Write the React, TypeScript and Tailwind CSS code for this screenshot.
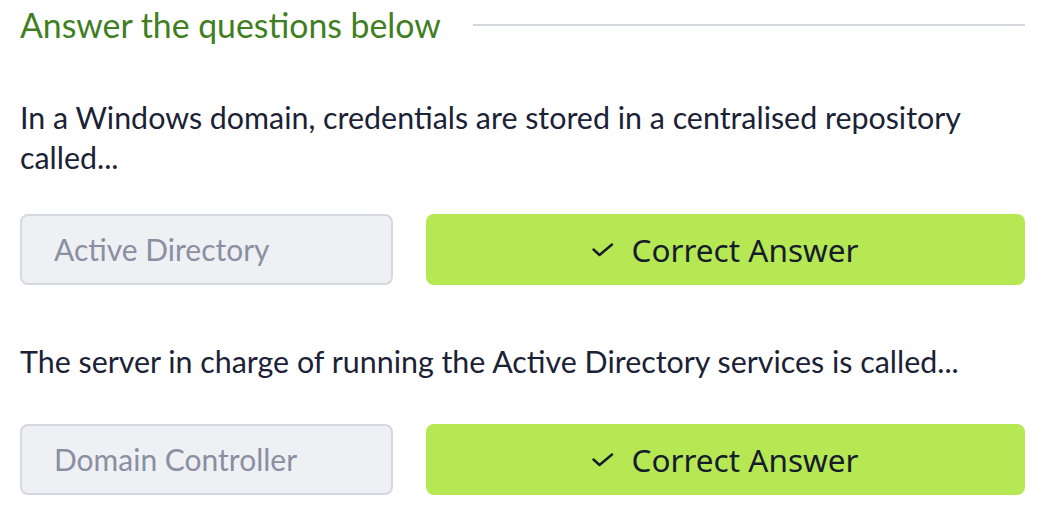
import React from "react";

function Check() {
  return (
    <svg width="22" height="14" viewBox="0 0 22 14" fill="none" className="shrink-0">
      <path d="M1.5 6.5 L7.5 12 L20 1.5" stroke="#161c2c" strokeWidth="2.4" strokeLinecap="round" strokeLinejoin="round" />
    </svg>
  );
}

function Question({ text, answer, gapClass }: { text: string; answer: string; gapClass: string }) {
  return (
    <div className="flex flex-col">
      <p className="text-[30.4px] leading-[40px] text-[#1b2235]" style={{ fontFamily: "Lato, sans-serif" }}>
        {text}
      </p>
      <div className={`${gapClass} flex gap-[33px]`}>
        <div className="flex h-[71px] w-[373px] items-center rounded-[8px] border-2 border-[#d5d8de] bg-[#eef0f4] pl-[32px] text-[30px] text-[#8a8fa1]" style={{ fontFamily: "Lato, sans-serif" }}>
          {answer}
        </div>
        <div className="flex h-[71px] flex-1 items-center justify-center gap-[17px] rounded-[8px] bg-[#b5e853] text-[31.5px] text-[#161c2c]" style={{ fontFamily: "'Noto Sans', sans-serif" }}>
          <Check />
          <span>Correct Answer</span>
        </div>
      </div>
    </div>
  );
}

export default function App() {
  return (
    <div className="w-[1060px] bg-white pl-[20px] pr-[35px] pt-[2px]">
      <div className="flex items-center">
        <h2 className="text-[33.8px] leading-[46px] text-[#3f7f22]" style={{ fontFamily: "Lato, sans-serif" }}>
          Answer the questions below
        </h2>
        <div className="ml-[32px] h-[2px] flex-1 bg-[#d3d7dc]" />
      </div>
      <div className="mt-[49px] flex flex-col gap-[56px]">
        <Question
          text="In a Windows domain, credentials are stored in a centralised repository called..."
          answer="Active Directory"
          gapClass="mt-[37px]"
        />
        <Question
          text="The server in charge of running the Active Directory services is called..."
          answer="Domain Controller"
          gapClass="mt-[43px]"
        />
      </div>
    </div>
  );
}
